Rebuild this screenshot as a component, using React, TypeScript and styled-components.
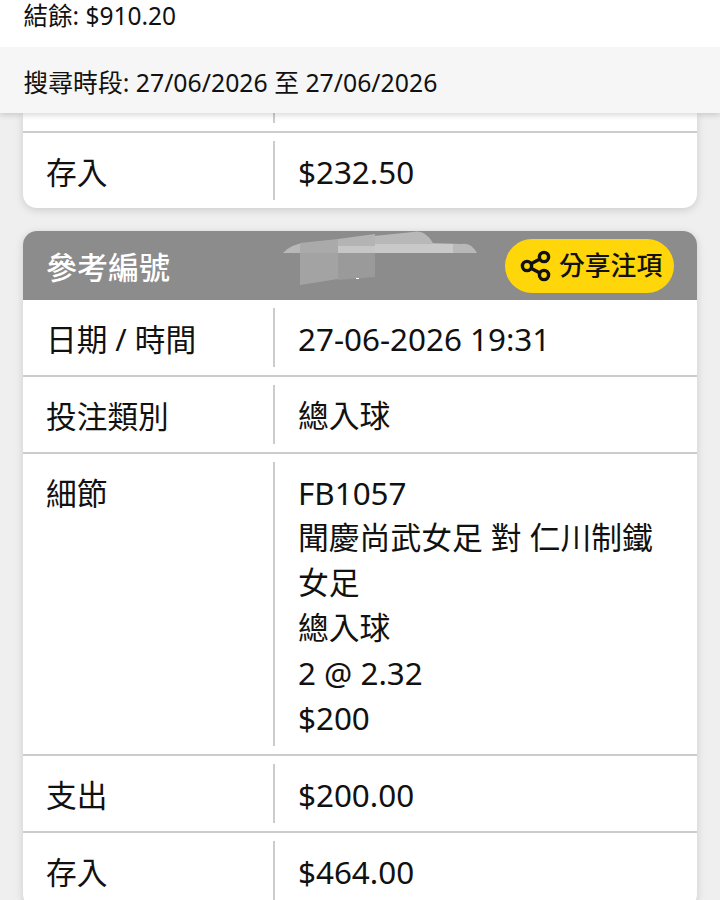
import React from "react";
import styled, { createGlobalStyle } from "styled-components";

const Global = createGlobalStyle`
  html, body { margin: 0; padding: 0; height: 900px; overflow: hidden; background: #efefef; }
  body { font-family: "Noto Sans", "Noto Sans CJK TC", sans-serif; color: #111; }
  * { box-sizing: border-box; }
`;

const Page = styled.div`
  height: 900px;
  overflow: hidden;
  display: flex;
  flex-direction: column;
`;
const TopBar = styled.header`
  position: relative;
  z-index: 2;
  box-shadow: 0 2px 6px rgba(0, 0, 0, 0.16);
`;
const Balance = styled.div`
  height: 47px;
  background: #fff;
  padding: 0 24px 0 23.5px;
  font-size: 24.5px;
  line-height: 32px;
`;
const Period = styled.div`
  height: 66px;
  background: #f6f6f6;
  padding: 0 24px 0 23.5px;
  font-size: 24.8px;
  line-height: 70px;
`;
const Content = styled.main`
  flex: 1;
  padding: 0 23px;
  display: flex;
  flex-direction: column;
  gap: 23px;
`;
const Card = styled.section<{ $clipped?: boolean }>`
  background: #fff;
  border-radius: ${(p) => (p.$clipped ? "0 0 14px 14px" : "14px")};
  box-shadow: 0 2px 9px rgba(0, 0, 0, 0.15);
  flex: none;
`;
const CardHead = styled.div`
  position: relative;
  height: 69px;
  background: #8c8c8c;
  border-radius: 14px 14px 0 0;
  padding: 0 23px 0 23px;
  display: flex;
  align-items: center;
  justify-content: space-between;
  color: #fff;
  font-size: 31px;
  font-weight: 500;
`;
const Smear = styled.svg`
  position: absolute;
  left: 260px;
  top: 0;
`;
const ShareButton = styled.button`
  width: 169px;
  height: 54px;
  border: 0;
  border-radius: 27px;
  background: #ffd60a;
  color: #111;
  padding: 0 0 0 15px;
  display: flex;
  align-items: center;
  gap: 7px;
  font: 500 25.8px/1 "Noto Sans", "Noto Sans CJK TC", sans-serif;
`;
const Row = styled.div`
  display: grid;
  grid-template-columns: 252px 1fr;
  padding: 8px 0;
  min-height: 75px;
  & + & {
    border-top: 2px solid #ccc;
    min-height: 77px;
  }
`;
const Stub = styled.div`
  height: 20px;
  border-bottom: 2px solid #ccc;
  display: grid;
  grid-template-columns: 252px 1fr;
`;
const StubMark = styled.div`
  height: 10px;
  border-right: 2px solid #ccc;
`;
const Label = styled.div`
  padding: 9px 0 0 23px;
  font-size: 30.7px;
  line-height: 45px;
  border-right: 2px solid #ccc;
  min-height: 59px;
`;
const Value = styled.div`
  padding: 8px 24px 0 23px;
  min-width: 0;
`;
const Line = styled.div<{ $cjk?: boolean }>`
  font-size: ${(p) => (p.$cjk ? "30.8px" : "31.4px")};
  line-height: 45px;
  white-space: nowrap;
`;
const DetailValue = styled(Value)`
  padding-bottom: 6px;
`;

function ShareIcon() {
  return (
    <svg width="32" height="32" viewBox="0 0 32 32" fill="none" stroke="#111" strokeWidth="3.4">
      <circle cx="24" cy="7" r="4.6" />
      <circle cx="7" cy="16" r="4.6" />
      <circle cx="24" cy="25" r="4.6" />
      <path d="M11 13.8 20 9M11 18.2 20 23" />
    </svg>
  );
}

const details: [string, boolean][] = [
  ["FB1057", false],
  ["聞慶尚武女足 對 仁川制鐵", true],
  ["女足", true],
  ["總入球", true],
  ["2 @ 2.32", false],
  ["$200", false],
];

export default function App() {
  return (
    <Page>
      <Global />
      <TopBar>
        <Balance>結餘: $910.20</Balance>
        <Period>搜尋時段: 27/06/2026 至 27/06/2026</Period>
      </TopBar>
      <Content>
        <Card $clipped>
          <Stub>
            <StubMark />
          </Stub>
          <Row>
            <Label>存入</Label>
            <Value><Line>$232.50</Line></Value>
          </Row>
        </Card>
        <Card>
          <CardHead>
            參考編號
            <Smear width="200" height="56" viewBox="0 0 200 56">
              <path d="M0 22Q8 13 22 12L130 1Q142 -2 150 12L178 13Q188 11 194 22Z" fill="#b8b8b8" />
              <path d="M17 12L55 8V22H17Z" fill="#aaaaaa" />
              <path d="M55 8L92 3V22H55Z" fill="#b4b4b4" />
              <path d="M55 15H92V22H55Z" fill="#c6c6c6" />
              <path d="M92 13H170V22H92Z" fill="#c9c9c9" />
              <path d="M17 22H55V48L17 54Z" fill="#a3a3a3" />
              <path d="M55 22H92V46L55 49Z" fill="#9a9a9a" />
              <path d="M73 47H76V48H73Z" fill="#fff" />
            </Smear>
            <ShareButton>
              <ShareIcon />
              分享注項
            </ShareButton>
          </CardHead>
          <Row>
            <Label>日期 / 時間</Label>
            <Value><Line>27-06-2026 19:31</Line></Value>
          </Row>
          <Row>
            <Label>投注類別</Label>
            <Value><Line $cjk>總入球</Line></Value>
          </Row>
          <Row>
            <Label>細節</Label>
            <DetailValue>
              {details.map(([text, cjk]) => (
                <Line key={text} $cjk={cjk}>{text}</Line>
              ))}
            </DetailValue>
          </Row>
          <Row>
            <Label>支出</Label>
            <Value><Line>$200.00</Line></Value>
          </Row>
          <Row>
            <Label>存入</Label>
            <Value><Line>$464.00</Line></Value>
          </Row>
        </Card>
      </Content>
    </Page>
  );
}
